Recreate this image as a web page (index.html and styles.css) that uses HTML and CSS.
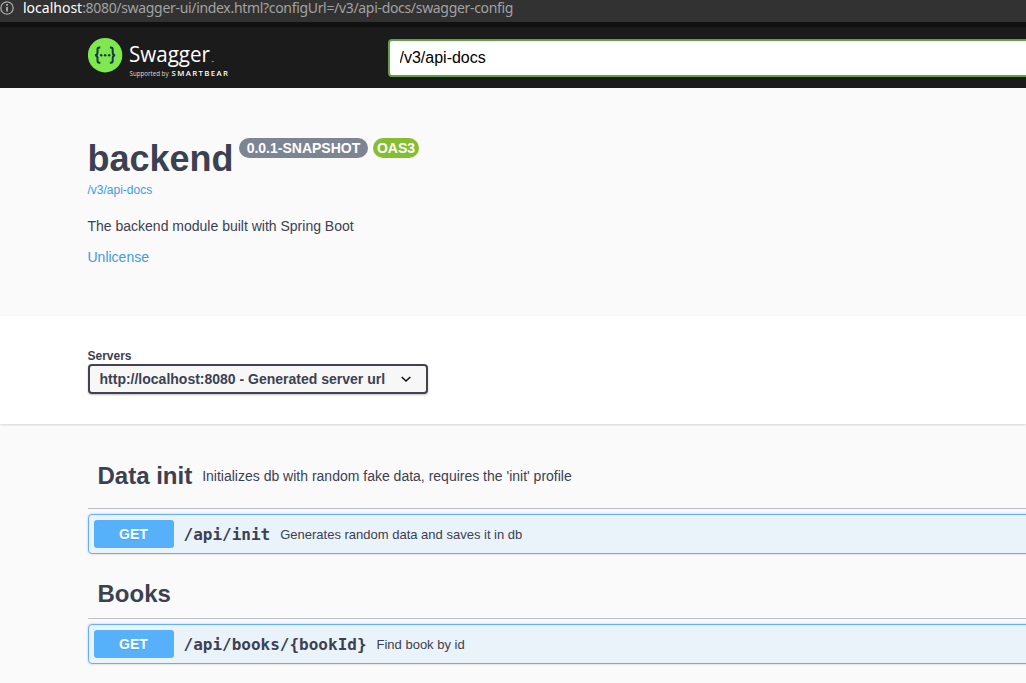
FILE: index.html
```html
<!DOCTYPE html>
<html lang="en">
<head>
<meta charset="utf-8">
<title>Swagger UI</title>
<link rel="stylesheet" href="styles.css">
</head>
<body>
<div class="address-bar">
  <svg class="info-icon" width="14" height="16" viewBox="0 0 14 16"><circle cx="7" cy="8" r="6.2" fill="none" stroke="#a8a8a8" stroke-width="1.3"/><path d="M7 7v4.5M7 4v1.7" stroke="#b8b8b8" stroke-width="1.7"/></svg>
  <span class="address"><b class="host">localhost</b><span class="path">:8080/swagger-ui/index.html?configUrl=/v3/api-docs/swagger-config</span></span>
</div>
<header class="topbar">
  <svg class="logo" width="150" height="50" viewBox="88 33 150 50">
    <circle cx="105.1" cy="55.2" r="17.2" fill="#7fe84f"/>
    <g fill="none" stroke="#173647" stroke-width="2">
      <path d="M100.3 47.6h-1q-1.8 0-1.8 2v2.8q0 2.8-2.5 2.8q2.5 0 2.5 2.8v2.8q0 2 1.8 2h1"/>
      <path d="M109.9 47.6h1q1.8 0 1.8 2v2.8q0 2.8 2.5 2.8q-2.5 0-2.5 2.8v2.8q0 2-1.8 2h-1"/>
    </g>
    <g fill="#173647"><circle cx="101.2" cy="55.3" r="1.25"/><circle cx="105.2" cy="55.3" r="1.25"/><circle cx="109.2" cy="55.3" r="1.25"/></g>
    <text class="logo-name" x="129" y="62.2" textLength="81" lengthAdjust="spacingAndGlyphs">Swagger</text>
    <path d="M211.5 61.5h2.5" stroke="#999" stroke-width=".8"/>
    <text class="logo-support" x="129.5" y="76" textLength="39" lengthAdjust="spacingAndGlyphs">Supported by</text>
    <text class="logo-brand" x="171.5" y="76" textLength="56.5">SMARTBEAR</text>
  </svg>
  <input class="spec-input" type="text" value="/v3/api-docs">
</header>
<section class="info">
  <div class="title-row"><h1 class="title">backend</h1><span class="badge version">0.0.1-SNAPSHOT</span><span class="badge oas">OAS3</span></div>
  <a class="spec-link">/v3/api-docs</a>
  <p class="description">The backend module built with Spring Boot</p>
  <a class="license">Unlicense</a>
</section>
<section class="servers">
  <div class="servers-label">Servers</div>
  <div class="server-select"><span>http://localhost:8080 - Generated server url</span>
    <svg width="12" height="10" viewBox="0 0 12 10"><path d="M1.7 3l4.3 4 4.3-4" fill="none" stroke="#111" stroke-width="1.6"/></svg>
  </div>
</section>
<main class="operations">
  <div class="tag tag-first"><h2 class="tag-name">Data init</h2><span class="tag-description">Initializes db with random fake data, requires the 'init' profile</span></div>
  <div class="operation"><span class="method">GET</span><span class="route">/api/init</span><span class="summary">Generates random data and saves it in db</span></div>
  <div class="tag tag-second"><h2 class="tag-name">Books</h2></div>
  <div class="operation"><span class="method">GET</span><span class="route">/api/books/{bookId}</span><span class="summary">Find book by id</span></div>
</main>
</body>
</html>
```
FILE: styles.css
```css
* { box-sizing: border-box; }
body { margin: 0; width: 1026px; height: 683px; overflow: hidden; background: #fafafa; color: #3b4151; font-family: "Liberation Sans", sans-serif; }
.address-bar { display: flex; align-items: center; height: 22px; padding-bottom: 6px; background: #323232; }
.info-icon { flex: none; margin-right: 9px; }
.address { display: flex; font: 14px/16px "Noto Sans", sans-serif; white-space: nowrap; }
.host { font-weight: 400; color: #fff; }
.path { color: #a2a2a2; letter-spacing: -0.32px; }
.topbar { display: flex; align-items: center; height: 66px; padding: 0 0 0 88px; border-top: 5px solid #111; background: #1b1b1b; }
.logo { flex: none; margin-right: 150px; }
.logo-name { font: 400 22.5px "Open Sans", sans-serif; fill: #fff; }
.logo-support { font: 6.3px "Open Sans", sans-serif; fill: #ddd; }
.logo-brand { font: 600 7.8px "Open Sans", sans-serif; fill: #fff; }
.spec-input { flex: none; width: 660px; height: 38px; padding: 0 9.5px; border: 2px solid #62a04a; border-radius: 4px 0 0 4px; outline: none; background: #fff; color: #000; font: 16px "Liberation Sans", sans-serif; }
.info { height: 228px; padding: 50px 0 0 87.5px; }
.title-row { display: flex; align-items: flex-start; height: 45px; }
.title { margin: 0; font-size: 36px; line-height: 41px; }
.badge { height: 20px; border-radius: 10px; color: #fff; font-size: 14px; font-weight: 700; line-height: 20px; text-align: center; }
.version { width: 129px; margin-left: 5.4px; background: #7d8492; }
.oas { width: 46px; margin-left: 5px; background: #87bd32; }
.spec-link { display: block; font-size: 12px; line-height: 14px; color: #4599e0; }
.description { margin: 21px 0 15px; font-size: 14px; line-height: 16px; }
.license { display: block; font-size: 14px; line-height: 16px; color: #4599e0; }
.servers { height: 108px; padding: 33px 0 0 87.5px; background: #fff; box-shadow: 0 1px 2px rgba(0,0,0,.15); }
.servers-label { height: 15px; font-size: 12px; font-weight: 700; line-height: 14px; }
.server-select { display: flex; align-items: center; justify-content: space-between; width: 340px; height: 30px; padding: 0 14px 0 10px; border: 2px solid #41444e; border-radius: 4px; background: #f7f7f7; box-shadow: 0 1px 2px rgba(0,0,0,.25); font-size: 14px; font-weight: 700; }
.operations { padding-left: 87.5px; }
.tag { display: flex; align-items: center; padding: 0 10px; border-bottom: 1px solid #bfc1c6; }
.tag-first { height: 85px; padding-top: 19px; }
.tag-second { height: 65px; padding-top: 16px; }
.tag-name { margin: 0 10px 0 0; font-size: 24px; line-height: 28px; }
.tag-description { font-size: 14px; }
.operation { display: flex; align-items: center; width: 960px; height: 40px; margin-top: 5px; padding-left: 5px; border: 1px solid #61affe; border-radius: 4px; background: #eaf2fa; box-shadow: 0 0 3px rgba(0,0,0,.19); }
.method { width: 80px; height: 28px; border-radius: 3px; background: #57b1fa; color: #fff; font-size: 14px; font-weight: 700; line-height: 28px; text-align: center; text-shadow: 0 1px 0 rgba(0,0,0,.1); }
.route { margin: 0 10px; font: 700 16px "DejaVu Sans Mono", monospace; }
.summary { font-size: 13px; }
```
